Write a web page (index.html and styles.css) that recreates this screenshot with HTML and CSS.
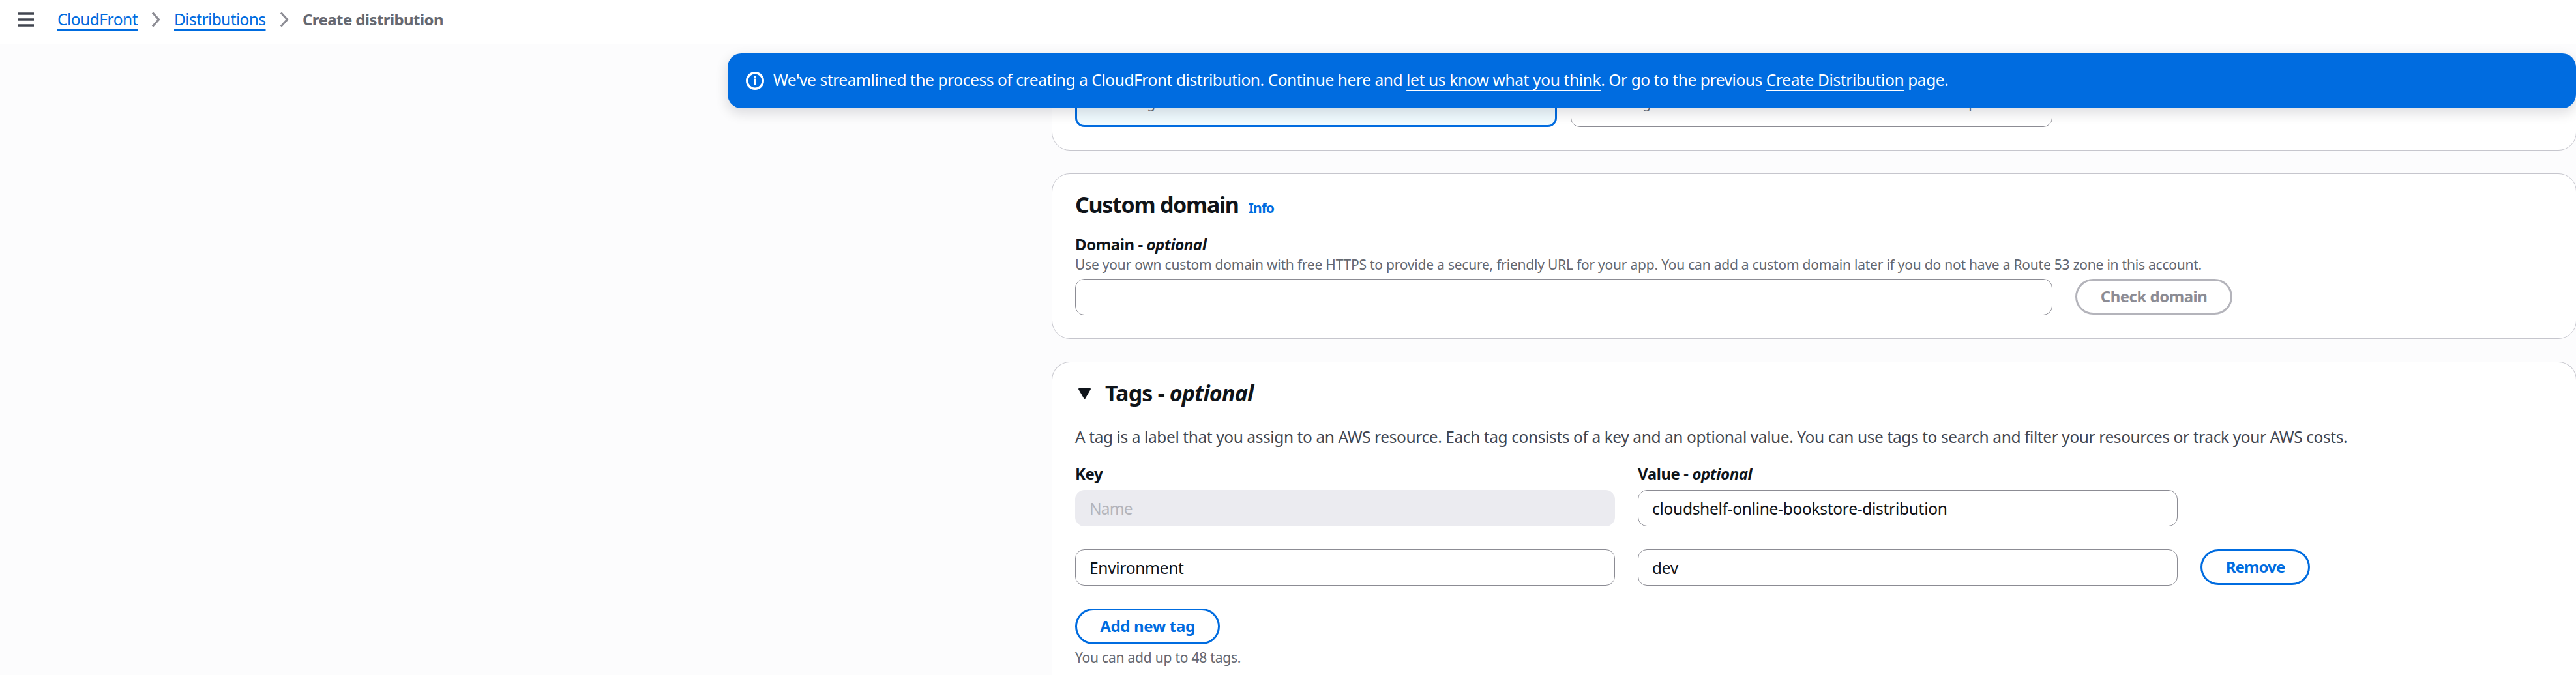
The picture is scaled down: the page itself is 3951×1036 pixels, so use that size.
FILE: index.html
```html
<!DOCTYPE html>
<html lang="en">
<head>
<meta charset="utf-8">
<title>Create distribution | CloudFront</title>
<link rel="stylesheet" href="styles.css">
</head>
<body>
<header class="topbar">
  <svg class="menu" width="25" height="22" viewBox="0 0 25 22"><path d="M0 2h25M0 11h25M0 20h25"/></svg>
  <nav class="crumbs">
    <a class="link crumb-service" href="#">CloudFront</a>
    <svg class="chevron" width="14" height="24" viewBox="0 0 14 24"><path d="M2 1.500 11.500 12 2 22.500"/></svg>
    <a class="link crumb-list" href="#">Distributions</a>
    <svg class="chevron" width="14" height="24" viewBox="0 0 14 24"><path d="M2 1.500 11.500 12 2 22.500"/></svg>
    <span class="crumb-current">Create distribution</span>
  </nav>
</header>

<div class="flash">
  <svg class="info-icon" width="28" height="28" viewBox="0 0 28 28"><circle cx="14" cy="14" r="12.250"/><path d="M14 12v9M14 7v3.500"/></svg>
  <p class="flash-text">We've streamlined the process of creating a CloudFront distribution. Continue here and <a class="flash-link" href="#">let us know what you think</a>. Or go to the previous <a class="flash-link" href="#">Create Distribution</a> page.</p>
</div>

<main class="content">
  <section class="card card-type">
    <div class="tiles">
      <div class="tile tile-selected"><p class="tile-text">configuration.</p></div>
      <div class="tile"><p class="tile-text">configurations across domains. This is common for SaaS providers.</p></div>
    </div>
  </section>

  <section class="card">
    <h2 class="heading"><span class="heading-domain">Custom domain</span><a class="info" href="#">Info</a></h2>
    <div class="label domain-label">Domain - <i>optional</i></div>
    <p class="hint">Use your own custom domain with free HTTPS to provide a secure, friendly URL for your app. You can add a custom domain later if you do not have a Route 53 zone in this account.</p>
    <div class="domain-row">
      <div class="field field-domain"></div>
      <button class="button button-disabled check">Check domain</button>
    </div>
  </section>

  <section class="card card-tags">
    <h2 class="heading heading-tags"><svg class="caret" width="21" height="18" viewBox="0 0 21 18"><path d="M2 1h17L10.500 15.500z"/></svg><span>Tags - <i>optional</i></span></h2>
    <p class="description">A tag is a label that you assign to an AWS resource. Each tag consists of a key and an optional value. You can use tags to search and filter your resources or track your AWS costs.</p>
    <div class="tag-grid tag-labels">
      <div class="label">Key</div>
      <div class="label">Value - <i>optional</i></div>
    </div>
    <div class="tag-grid">
      <div class="field field-disabled">Name</div>
      <div class="field">cloudshelf-online-bookstore-distribution</div>
      <span></span>
      <div class="field">Environment</div>
      <div class="field">dev</div>
      <button class="button remove">Remove</button>
    </div>
    <button class="button add">Add new tag</button>
    <p class="hint hint-count">You can add up to 48 tags.</p>
  </section>
</main>
</body>
</html>
```
FILE: styles.css
```css
* { box-sizing: border-box; }
body {
  margin: 0;
  height: 1036px;
  overflow: hidden;
  position: relative;
  background: #fcfcfd;
  color: #0f141a;
  font: 24.5px/35px "Noto Sans", "Open Sans", sans-serif;
  letter-spacing: -0.42px;
}
p, h2 { margin: 0; }
a { color: #006ce0; text-decoration: none; }
svg { display: block; flex: none; fill: none; }

.topbar {
  display: flex;
  align-items: flex-start;
  height: 68px;
  padding: 12px 0 0 27px;
  background: #fff;
  border-bottom: 1px solid #c6c6cd;
}
.menu { margin-top: 7px; stroke: #424650; stroke-width: 3.5; }
.crumbs { display: flex; align-items: flex-start; margin-left: 36px; }
.link, .flash-link {
  text-decoration: underline;
  text-decoration-thickness: 2px;
  text-underline-offset: 6px;
  text-decoration-skip-ink: none;
}
.crumb-service { width: 123px; letter-spacing: -0.5px; }
.crumb-list { width: 141px; letter-spacing: -0.6px; }
.crumb-service, .crumb-list, .crumb-current { white-space: nowrap; }
.crumb-current { color: #656871; font-size: 24px; font-weight: 700; letter-spacing: -0.58px; }
.chevron { margin: 6px 21px 0; stroke: #8c8c94; stroke-width: 3.2; }

.flash {
  position: absolute;
  z-index: 1;
  top: 82px;
  left: 1116px;
  right: 0;
  height: 84px;
  display: flex;
  align-items: flex-start;
  padding: 23px 28px;
  gap: 14px;
  border-radius: 21px;
  background: #006ce0;
  color: #fff;
  box-shadow: 0 7px 18px 2px rgba(0, 7, 22, 0.12);
}
.info-icon { margin-top: 5px; stroke: #fff; stroke-width: 3.5; }
.flash-text { white-space: nowrap; letter-spacing: -0.43px; }
.flash-link { color: #fff; letter-spacing: -0.36px; }

.content {
  display: flex;
  flex-direction: column;
  gap: 35px;
  margin: 22px -1px 0 1613px;
}
.card {
  padding: 26px 35px 35px;
  border: 1px solid #c6c6cd;
  border-radius: 28px;
  background: #fff;
}
.card-type { height: 141px; padding: 0 35px 35px; }
.card-tags { height: 481px; padding-bottom: 0; border-bottom: 0; border-radius: 28px 28px 0 0; }
.tiles { display: flex; gap: 21px; height: 104px; }
.tile {
  width: 739px;
  padding: 52px 20px 0 62px;
  border: 1px solid #8c8c94;
  border-radius: 14px;
}
.tile-selected { padding: 50px 20px 0 60px; border: 3px solid #006ce0; background: #f0fbff; }
.tile-text { color: #656871; font-size: 21px; line-height: 28px; letter-spacing: -0.22px; white-space: nowrap; }

.heading {
  display: flex;
  align-items: baseline;
  font-size: 34px;
  line-height: 42px;
  font-weight: 700;
}
.heading-domain { letter-spacing: -1.3px; }
.info { margin-left: 15px; font-size: 21px; line-height: 28px; letter-spacing: -0.9px; }
.heading-tags { gap: 21px; padding-left: 4px; letter-spacing: -0.8px; }
.caret { align-self: flex-start; margin-top: 14px; fill: #0f141a; stroke: #0f141a; stroke-width: 2; stroke-linejoin: round; }

.label { font-size: 24px; font-weight: 700; letter-spacing: -0.42px; }
.domain-label { margin-top: 22px; }
.hint { color: #656871; font-size: 21px; line-height: 28px; letter-spacing: -0.22px; white-space: nowrap; }
.domain-row { display: flex; gap: 35px; margin-top: 8px; }
.field {
  display: flex;
  align-items: center;
  height: 56px;
  padding: 0 21px;
  border: 1px solid #8c8c94;
  border-radius: 14px;
  background: #fff;
  letter-spacing: -0.29px;
}
.field-domain { width: 1499px; }
.field-disabled { border-color: #ebebf0; background: #ebebf0; color: #b4b4bb; letter-spacing: -0.8px; }

.button {
  height: 55px;
  padding: 0 0 2px;
  border: 3px solid #006ce0;
  border-radius: 35px;
  background: #fff;
  color: #006ce0;
  font: 700 24px/35px "Noto Sans", "Open Sans", sans-serif;
  letter-spacing: -0.5px;
}
.button-disabled { border-color: #b4b4bb; color: #8c8c94; }
.check { width: 241px; }
.remove { width: 168px; letter-spacing: -0.9px; }
.add { display: block; width: 222px; margin-top: 35px; letter-spacing: -0.35px; }

.description { margin-top: 29px; color: #424650; letter-spacing: -0.41px; white-space: nowrap; }
.tag-grid { display: grid; grid-template-columns: 828px 828px auto; justify-content: start; gap: 35px; }
.tag-labels { margin: 21px 0 8px; }
.hint-count { margin-top: 6px; }
```
